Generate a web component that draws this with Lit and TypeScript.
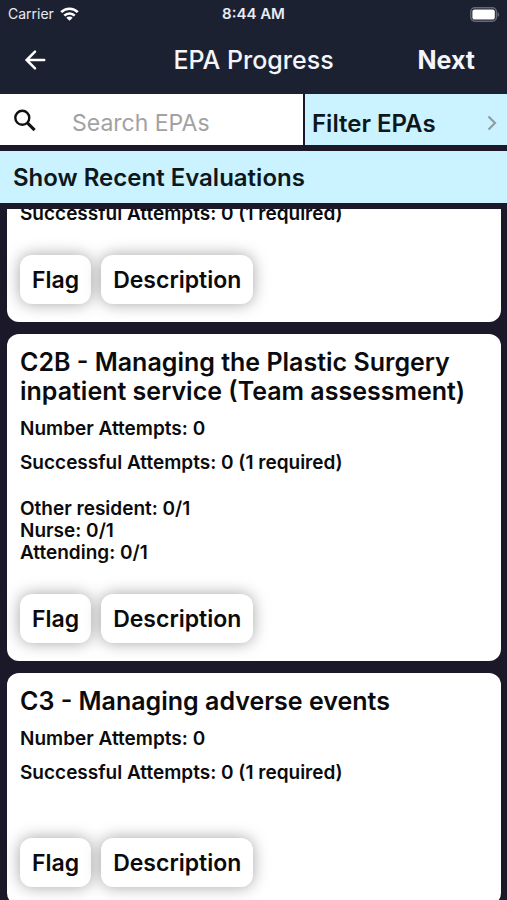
import { LitElement, html, css, nothing } from "lit";
import { customElement, property, query } from "lit/decorators.js";

interface Epa {
  title?: string;
  attempts?: number;
  successful: string;
  roles?: string[];
}

const EPAS: Epa[] = [
  { successful: "0 (1 required)" },
  {
    title: "C2B - Managing the Plastic Surgery inpatient service (Team assessment)",
    attempts: 0,
    successful: "0 (1 required)",
    roles: ["Other resident: 0/1", "Nurse: 0/1", "Attending: 0/1"],
  },
  {
    title: "C3 - Managing adverse events",
    attempts: 0,
    successful: "0 (1 required)",
    roles: [],
  },
];

@customElement("status-bar")
class StatusBar extends LitElement {
  static styles = css`
    :host {
      display: grid;
      grid-template-columns: 1fr auto 1fr;
      align-items: center;
      height: 28px;
      padding: 0 8px;
      font-size: 14px;
      line-height: 20px;
      color: #e9ebf2;
    }
    .carrier {
      display: flex;
      align-items: center;
      gap: 6px;
    }
    .time {
      font-size: 15px;
      font-weight: 600;
    }
    .battery {
      justify-self: end;
    }
    svg {
      display: block;
    }
  `;

  render() {
    return html`
      <div class="carrier">
        <span>Carrier</span>
        <svg width="19" height="14" viewBox="0 0 19 14" aria-hidden="true">
          <g fill="none" stroke="#fff" stroke-width="2.6">
            <path d="M1.2 5.2C5.8 .6 13.2 .6 17.8 5.2" />
            <path d="M4.3 8.6c2.9-2.9 7.5-2.9 10.4 0" />
          </g>
          <path d="M9.5 13.8 6.3 10.8c1.7-1.6 4.7-1.6 6.4 0z" fill="#fff" />
        </svg>
      </div>
      <span class="time">8:44 AM</span>
      <svg class="battery" width="30" height="15" viewBox="0 0 30 15" aria-hidden="true">
        <rect x="1.8" y=".8" width="25.6" height="13.4" rx="4" fill="none" stroke="#666975" stroke-width="1.4" />
        <rect x="3.4" y="2.4" width="22.4" height="10.2" rx="2.2" fill="#fff" />
        <path d="M28.6 5c2 .8 2 4.2 0 5z" fill="#666975" />
      </svg>
    `;
  }
}

@customElement("epa-card")
class EpaCard extends LitElement {
  @property({ attribute: false }) epa!: Epa;

  static styles = css`
    :host {
      display: block;
      padding: 14px 13px 18px;
      border-radius: 12px;
      background: #fff;
      color: #0b0b0d;
      font-weight: 600;
    }
    .title {
      margin: 0 0 12px;
      font-size: 25px;
      line-height: 29px;
      font-weight: 600;
    }
    .line {
      margin: 0;
      font-size: 19px;
      line-height: 22px;
    }
    .attempts {
      margin-bottom: 12px;
    }
    .roles {
      margin: 0;
      padding: 24px 0 0;
      list-style: none;
    }
    .actions {
      display: flex;
      gap: 10px;
      margin-top: 30px;
    }
    button {
      height: 49px;
      padding: 0 12px;
      border: 0;
      border-radius: 12px;
      background: #fff;
      box-shadow: 0 0 16px rgba(0, 0, 0, 0.36);
      font: inherit;
      font-size: 23px;
      color: inherit;
    }
  `;

  render() {
    const { title, attempts, successful, roles } = this.epa;
    return html`
      ${title ? html`<h2 class="title">${title}</h2>` : nothing}
      ${attempts !== undefined
        ? html`<p class="line attempts">Number Attempts: ${attempts}</p>`
        : nothing}
      <p class="line">Successful Attempts: ${successful}</p>
      ${roles
        ? html`<ul class="roles">${roles.map((r) => html`<li class="line">${r}</li>`)}</ul>`
        : nothing}
      <div class="actions">
        <button type="button">Flag</button>
        <button type="button">Description</button>
      </div>
    `;
  }
}

@customElement("app-root")
class AppRoot extends LitElement {
  @query(".list") list!: HTMLElement;

  static styles = css`
    :host {
      display: flex;
      flex-direction: column;
      height: 100vh;
      background: #1b1829;
      font-family: Inter, "Liberation Sans", sans-serif;
    }
    .top {
      background: #1c2132;
      color: #f4f5fa;
    }
    .nav {
      display: grid;
      grid-template-columns: 1fr auto 1fr;
      align-items: center;
      height: 66px;
      padding: 0 32px 2px 24px;
      box-sizing: border-box;
    }
    .nav {
      padding: 0 32px 2px;
    }
    .nav h1 {
      margin: 0;
      font-size: 25px;
      line-height: 30px;
      font-weight: 500;
    }
    button {
      padding: 0;
      border: 0;
      background: none;
      font: inherit;
      color: inherit;
    }
    .back {
      justify-self: start;
      margin-left: -8px;
    }
    .next {
      justify-self: end;
      font-size: 25px;
      line-height: 30px;
      font-weight: 700;
    }
    svg {
      display: block;
    }
    .tools {
      display: grid;
      grid-template-columns: 3fr 2fr;
      gap: 2px;
      height: 51px;
      margin-bottom: 6px;
    }
    .search {
      display: flex;
      align-items: center;
      gap: 32px;
      min-width: 0;
      padding-left: 12px;
      background: #fff;
    }
    .search svg {
      flex: none;
    }
    input {
      flex: 1;
      min-width: 0;
      height: 100%;
      padding: 6px 0 0;
      box-sizing: border-box;
      border: 0;
      outline: 0;
      background: none;
      font: inherit;
      font-size: 23px;
    }
    input::placeholder {
      color: #a2a2a2;
      opacity: 1;
    }
    .filter,
    .recent {
      background: #cbf2ff;
      color: #0e171c;
      font-size: 24px;
      font-weight: 600;
      text-align: left;
    }
    .filter {
      display: flex;
      align-items: center;
      justify-content: space-between;
      padding: 7px 9px 0 7px;
    }
    .recent {
      flex: none;
      height: 52px;
      margin-bottom: 6px;
      padding: 0 13px;
    }
    .list {
      flex: 1;
      min-height: 0;
      display: flex;
      flex-direction: column;
      gap: 12px;
      padding: 0 6px 12px 7px;
      overflow-y: auto;
      scrollbar-width: none;
    }
    epa-card {
      flex: none;
    }
  `;

  async firstUpdated() {
    await Promise.all(
      [...this.list.querySelectorAll<EpaCard>("epa-card")].map((c) => c.updateComplete),
    );
    this.list.scrollTop = 20;
  }

  render() {
    return html`
      <header class="top">
        <status-bar></status-bar>
        <div class="nav">
          <button class="back" type="button" aria-label="Back">
            <svg width="26" height="26" viewBox="0 0 26 26" aria-hidden="true">
              <path
                d="M20.2 13H3.4M11 4.600 2.600 13l8.400 8.400"
                fill="none"
                stroke="#fff"
                stroke-width="2.5"
                stroke-linecap="round"
              />
            </svg>
          </button>
          <h1>EPA Progress</h1>
          <button class="next" type="button">Next</button>
        </div>
      </header>
      <div class="tools">
        <label class="search">
          <svg width="28" height="28" viewBox="0 0 28 28" aria-hidden="true">
            <circle cx="10.3" cy="11.8" r="7" fill="none" stroke="#111" stroke-width="2.4" />
            <path d="M15.4 16.9 22.6 24.1" stroke="#111" stroke-width="3" />
          </svg>
          <input type="search" placeholder="Search EPAs" aria-label="Search EPAs" />
        </label>
        <button class="filter" type="button">
          <span>Filter EPAs</span>
          <svg width="12" height="16" viewBox="0 0 12 16" aria-hidden="true">
            <path d="M2.5 1.5 9 8l-6.5 6.5" fill="none" stroke="#8e9da3" stroke-width="2.2" />
          </svg>
        </button>
      </div>
      <button class="recent" type="button">Show Recent Evaluations</button>
      <main class="list">${EPAS.map((epa) => html`<epa-card .epa=${epa}></epa-card>`)}</main>
    `;
  }
}
